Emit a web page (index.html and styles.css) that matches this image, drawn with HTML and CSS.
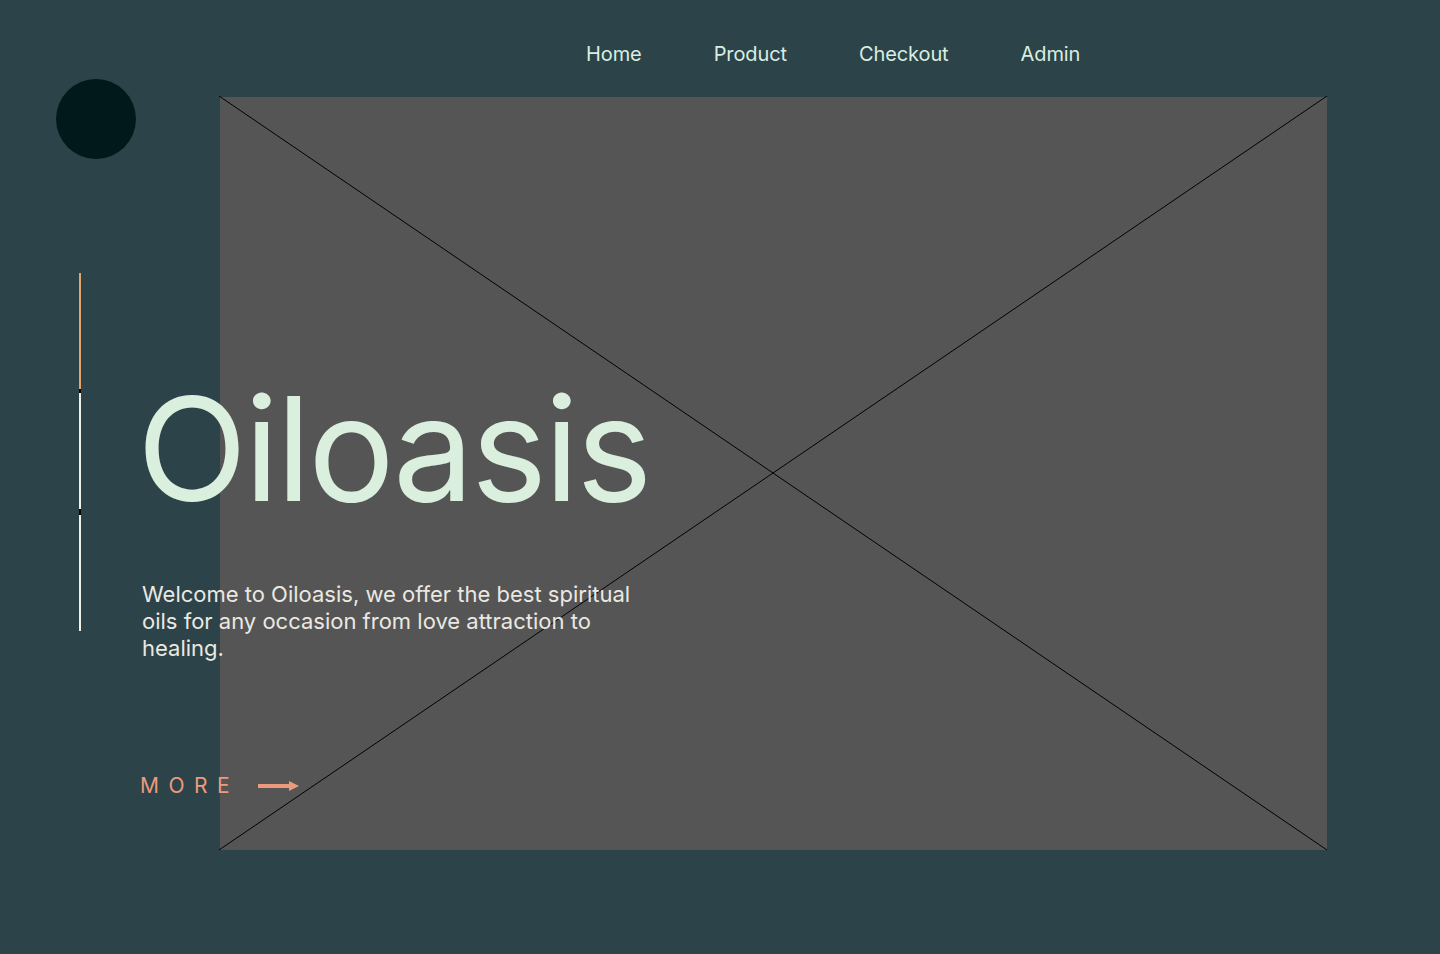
FILE: index.html
```html
<!DOCTYPE html>
<html lang="en">
<head>
<meta charset="utf-8">
<title>Oiloasis</title>
<link rel="stylesheet" href="styles.css">
</head>
<body>
<header class="header">
  <nav class="nav">
    <a class="nav-link" href="#">Home</a>
    <a class="nav-link" href="#">Product</a>
    <a class="nav-link" href="#">Checkout</a>
    <a class="nav-link" href="#">Admin</a>
  </nav>
</header>
<main class="hero">
  <div class="logo"></div>
  <div class="picture">
    <svg class="cross" viewBox="0 0 1108 754" preserveAspectRatio="none">
      <line x1="0" y1="0" x2="1108" y2="754" />
      <line x1="1108" y1="0" x2="0" y2="754" />
    </svg>
  </div>
  <section class="side">
    <div class="rail">
      <span class="seg seg-orange"></span>
      <span class="seg seg-gap"></span>
      <span class="seg seg-white"></span>
      <span class="seg seg-gap2"></span>
      <span class="seg seg-white"></span>
    </div>
    <div class="copy">
      <h1 class="title">Oiloasis</h1>
      <p class="lead">Welcome to Oiloasis, we offer the best spiritual oils for any occasion from love attraction to healing.</p>
      <a class="more" href="#"><span class="more-text">MORE</span>
        <svg class="arrow" width="42" height="12" viewBox="0 0 42 12"><rect x="0" y="4" width="33" height="4" fill="#eb9a7c"/><polygon points="31,1 41,6 31,11" fill="#eb9a7c"/></svg>
      </a>
    </div>
  </section>
</main>
</body>
</html>
```
FILE: styles.css
```css
* { box-sizing: border-box; }
html, body { margin: 0; padding: 0; }
body {
  background: #2c4449;
  font-family: Inter, "Noto Sans", sans-serif;
  width: 1440px;
  height: 954px;
  overflow: hidden;
}
.header {
  height: 79px;
  padding-top: 42px;
}
.nav {
  display: flex;
  gap: 72px;
  padding-left: 586px;
}
.nav-link {
  color: #d9eee0;
  font-size: 20px;
  line-height: 24px;
  letter-spacing: -0.1px;
  text-decoration: none;
}
.hero {
  display: grid;
  grid-template-columns: 220px 1107px;
  grid-template-rows: 771px;
}
.logo {
  grid-column: 1;
  grid-row: 1;
  width: 80px;
  height: 80px;
  margin-left: 56px;
  border-radius: 50%;
  background: #01191a;
}
.picture {
  grid-column: 2;
  grid-row: 1;
  margin-top: 18px;
  height: 753px;
  background: #555555;
  position: relative;
}
.cross {
  position: absolute;
  left: -1px;
  top: -1px;
  width: 1108px;
  height: 754px;
  overflow: visible;
}
.cross line {
  stroke: #000;
  stroke-width: 1;
}
.side {
  grid-column: 1 / 3;
  grid-row: 1;
  display: flex;
  align-items: flex-start;
  padding-left: 79px;
  padding-top: 194px;
  position: relative;
}
.rail {
  width: 2px;
  display: flex;
  flex-direction: column;
}
.seg { display: block; width: 2px; }
.seg-orange { height: 116px; background: #e5a56c; }
.seg-gap { height: 4px; background: #000; }
.seg-gap2 { height: 6px; background: #000; }
.seg-white { height: 116px; background: #efefe9; }
.copy {
  margin-left: 61px;
  margin-top: 104px;
  display: flex;
  flex-direction: column;
}
.title {
  margin: 0 0 0 -5px;
  font-size: 144px;
  line-height: 144px;
  font-weight: 400;
  color: #dbefdf;
  letter-spacing: -0.02em;
}
.lead {
  margin: 60px 0 0 0;
  width: 500px;
  font-size: 22px;
  line-height: 27px;
  color: #ebe8e2;
}
.more {
  margin-top: 109px;
  margin-left: -2px;
  display: flex;
  align-items: center;
  gap: 19px;
  text-decoration: none;
  color: #eb9a7c;
  height: 30px;
}
.more-text {
  font-size: 21px;
  letter-spacing: 9.5px;
  line-height: 30px;
}
.arrow { display: block; }
```
